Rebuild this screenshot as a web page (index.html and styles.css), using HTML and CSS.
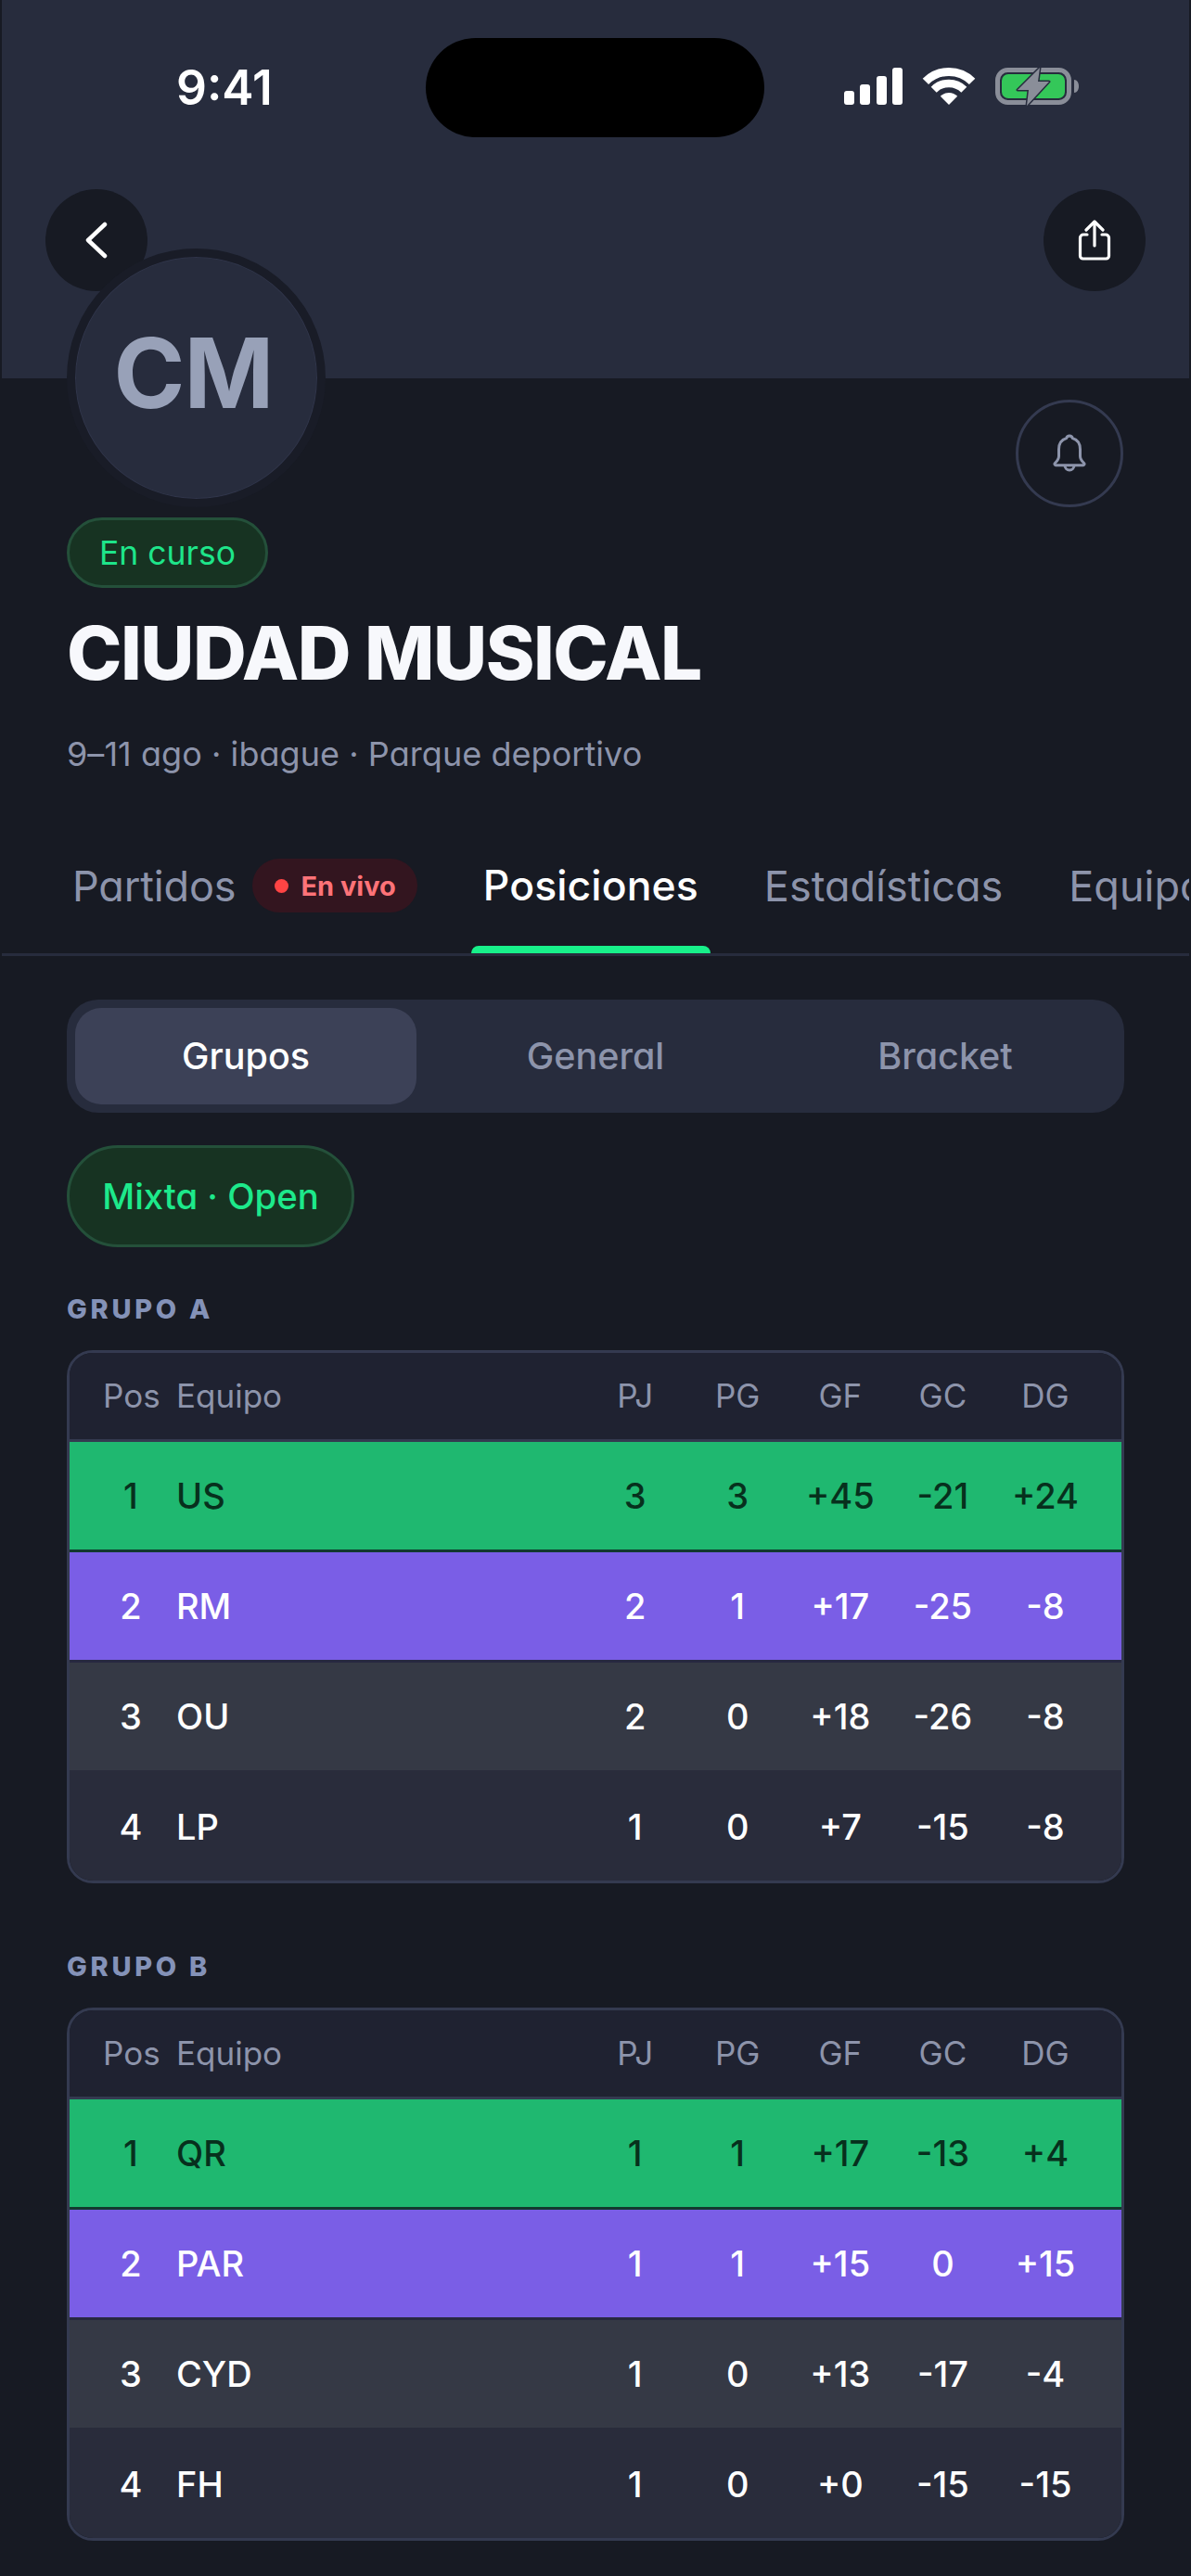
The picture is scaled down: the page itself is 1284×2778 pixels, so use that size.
FILE: index.html
```html
<!DOCTYPE html>
<html lang="es">
<head>
<meta charset="utf-8">
<title>Ciudad Musical</title>
<link rel="stylesheet" href="styles.css">
</head>
<body>
<div class="page">
  <header class="hero">
    <div class="status">
      <div class="time">9:41</div>
      <div class="island"></div>
      <svg class="status-icons" width="253" height="42" viewBox="0 0 253 42">
        <rect x="0" y="25" width="11" height="15" rx="3" fill="#fff"/>
        <rect x="17" y="18" width="11" height="22" rx="3" fill="#fff"/>
        <rect x="35" y="9" width="11" height="31" rx="3" fill="#fff"/>
        <rect x="52" y="0" width="11" height="40" rx="3" fill="#fff"/>
        <path d="M87.9 14.9A35.5 35.5 0 0 1 138.1 14.9" fill="none" stroke="#fff" stroke-width="9"/>
        <path d="M96.7 23.7A23 23 0 0 1 129.3 23.7" fill="none" stroke="#fff" stroke-width="8.5"/>
        <path d="M113 40L103.8 30.8A13 13 0 0 1 122.2 30.8Z" fill="#fff"/>
        <rect x="165.5" y="2.5" width="77" height="35" rx="11" fill="none" stroke="#8a8e99" stroke-width="5"/>
        <rect x="170" y="7" width="68" height="26" rx="7" fill="#34c759"/>
        <path d="M248 13c3 0 5 3 5 7s-2 7-5 7z" fill="#8a8e99"/>
        <polygon points="211,0 187,24 199,24 197,41 221,15 209,15" fill="#8a8e99" stroke="#272c3d" stroke-width="3" paint-order="stroke" stroke-linejoin="round"/>
      </svg>
    </div>
    <div class="hero-actions">
      <button class="round-btn" type="button" aria-label="Volver">
        <svg width="24" height="40" viewBox="0 0 24 40"><path d="M21 3L3 20L21 37" fill="none" stroke="#fff" stroke-width="4.5" stroke-linecap="round" stroke-linejoin="round"/></svg>
      </button>
      <button class="round-btn" type="button" aria-label="Compartir">
        <svg width="36" height="44" viewBox="0 0 36 44"><path d="M10 16H6a3.500 3.500 0 0 0-3.500 3.500V39a3 3 0 0 0 3 3H30.500a3 3 0 0 0 3-3V19.500A3.500 3.500 0 0 0 30 16H26M18 2V28M9 11L18 2L27 11" fill="none" stroke="#fff" stroke-width="3.200" stroke-linecap="round" stroke-linejoin="round"/></svg>
      </button>
    </div>
  </header>

  <section class="head">
    <div class="head-top">
      <div class="avatar"><span>CM</span></div>
      <button class="bell-btn" type="button" aria-label="Notificaciones">
        <svg width="36" height="42" viewBox="0 0 36 42"><path d="M18 2a3.500 3.500 0 0 1 3.300 2.600C27 6.300 29.500 11 29.500 16.500V24c0 3 2 5.500 4.200 7.500a1.300 1.300 0 0 1-.8 2.200H3.100a1.300 1.300 0 0 1-.8-2.200C4.500 29.500 6.500 27 6.500 24V16.500C6.500 11 9 6.300 14.700 4.600A3.500 3.500 0 0 1 18 2ZM13 34a5 5 0 0 0 10 0" fill="none" stroke="#8d94ab" stroke-width="3" stroke-linejoin="round"/></svg>
      </button>
    </div>
    <div class="status-pill">En curso</div>
    <h1 class="title">CIUDAD MUSICAL</h1>
    <p class="meta">9–11 ago · ibague · Parque deportivo</p>
  </section>

  <nav class="tabs">
    <div class="tab tab-matches">Partidos<span class="live"><i class="live-dot"></i>En vivo</span></div>
    <div class="tab tab-active">Posiciones</div>
    <div class="tab">Estadísticas</div>
    <div class="tab">Equipos</div>
  </nav>

  <main class="content">
    <div class="segment">
      <div class="seg seg-active">Grupos</div>
      <div class="seg">General</div>
      <div class="seg">Bracket</div>
    </div>
    <div class="chip">Mixta · Open</div>

    <h2 class="group-name">GRUPO A</h2>
    <div class="table">
      <div class="row row-head"><span class="pos">Pos</span><span class="team">Equipo</span><span>PJ</span><span>PG</span><span>GF</span><span>GC</span><span>DG</span></div>
      <div class="row row-first"><span class="pos">1</span><span class="team">US</span><span>3</span><span>3</span><span>+45</span><span>-21</span><span>+24</span></div>
      <div class="row row-second"><span class="pos">2</span><span class="team">RM</span><span>2</span><span>1</span><span>+17</span><span>-25</span><span>-8</span></div>
      <div class="row row-third"><span class="pos">3</span><span class="team">OU</span><span>2</span><span>0</span><span>+18</span><span>-26</span><span>-8</span></div>
      <div class="row row-last"><span class="pos">4</span><span class="team">LP</span><span>1</span><span>0</span><span>+7</span><span>-15</span><span>-8</span></div>
    </div>

    <h2 class="group-name group-next">GRUPO B</h2>
    <div class="table">
      <div class="row row-head"><span class="pos">Pos</span><span class="team">Equipo</span><span>PJ</span><span>PG</span><span>GF</span><span>GC</span><span>DG</span></div>
      <div class="row row-first"><span class="pos">1</span><span class="team">QR</span><span>1</span><span>1</span><span>+17</span><span>-13</span><span>+4</span></div>
      <div class="row row-second"><span class="pos">2</span><span class="team">PAR</span><span>1</span><span>1</span><span>+15</span><span>0</span><span>+15</span></div>
      <div class="row row-third"><span class="pos">3</span><span class="team">CYD</span><span>1</span><span>0</span><span>+13</span><span>-17</span><span>-4</span></div>
      <div class="row row-last"><span class="pos">4</span><span class="team">FH</span><span>1</span><span>0</span><span>+0</span><span>-15</span><span>-15</span></div>
    </div>
  </main>
</div>
</body>
</html>
```
FILE: styles.css
```css
* { box-sizing: border-box; }
html, body { margin: 0; padding: 0; }
body {
  width: 1284px;
  height: 2778px;
  overflow: hidden;
  background: #171a23;
  color: #fff;
  font-family: Inter, "Noto Sans", sans-serif;
  font-feature-settings: "cv11" 1;
}
.page { margin: 0 2px; width: 1280px; }

.hero { height: 408px; padding-top: 40px; background: #272c3d; }
.status {
  display: grid;
  grid-template-columns: 457px 365px 1fr;
  align-items: center;
  height: 107px;
}
.time { padding: 1px 0 0 188px; font-size: 51.500px; font-weight: 600; line-height: 107px; }
.island { height: 107px; border-radius: 54px; background: #000; }
.status-icons { display: block; margin: 0 0 0 86px; }
.hero-actions {
  display: flex;
  justify-content: space-between;
  padding: 57px 47px 0;
}
.round-btn {
  display: flex;
  align-items: center;
  justify-content: center;
  width: 110px;
  height: 110px;
  padding: 0;
  border: 0;
  border-radius: 50%;
  background: #171a23;
}

.head { padding: 0 70px; margin-top: -140px; position: relative; }
.head-top { display: flex; justify-content: space-between; align-items: flex-end; }
.avatar {
  display: flex;
  align-items: center;
  justify-content: center;
  width: 279px;
  height: 279px;
  padding: 0 6px 12px 0;
  border: 9px solid #191c27;
  border-radius: 50%;
  background: #272c3d;
  box-shadow: inset 0 0 0 1px #30354a;
  color: #98a1b8;
  font-size: 104px;
  font-weight: 700;
  letter-spacing: -1px;
}
.bell-btn {
  display: flex;
  align-items: center;
  justify-content: center;
  width: 116px;
  height: 116px;
  margin-right: 1px;
  padding: 0;
  border: 3px solid #343a50;
  border-radius: 50%;
  background: transparent;
}
.status-pill {
  display: flex;
  align-items: center;
  justify-content: center;
  width: 217px;
  height: 76px;
  margin-top: 11px;
  border: 3px solid #24503a;
  border-radius: 38px;
  background: #173322;
  color: #1ee58a;
  font-size: 35.500px;
}
.title {
  margin: 20px 0 0;
  font-size: 80px;
  font-weight: 800;
  line-height: 100px;
  letter-spacing: -1.500px;
  color: #f7f8fc;
  white-space: nowrap;
}
.meta {
  margin: 34px 0 0;
  font-size: 36px;
  line-height: 50px;
  letter-spacing: .05px;
  color: #8d94ab;
  white-space: nowrap;
}

.tabs {
  display: flex;
  gap: 45px;
  height: 149px;
  margin-top: 44px;
  padding: 0 0 0 63px;
  border-bottom: 3px solid #272c3d;
  overflow: hidden;
}
.tab {
  display: flex;
  flex: none;
  align-items: center;
  position: relative;
  height: 146px;
  padding: 0 13px;
  font-size: 45px;
  color: #8d94ab;
  white-space: nowrap;
}
.tab-matches { letter-spacing: -.15px; }
.tab-active { color: #fff; font-size: 44.500px; font-weight: 500; letter-spacing: .1px; }
.tab-active::after {
  content: "";
  position: absolute;
  left: 0;
  right: 0;
  bottom: 0;
  height: 8px;
  border-radius: 8px 8px 0 0;
  background: #18f08a;
}
.live {
  display: inline-flex;
  align-items: center;
  gap: 13px;
  height: 58px;
  margin-left: 18px;
  padding: 0 23px 0 24px;
  border-radius: 29px;
  background: #33151f;
  color: #ff7378;
  font-size: 29px;
  font-weight: 700;
  letter-spacing: 0;
}
.live-dot { width: 15px; height: 15px; border-radius: 50%; background: #ff4444; }

.content { padding: 47px 70px 0; }
.segment {
  display: flex;
  gap: 9px;
  height: 122px;
  padding: 9px;
  border-radius: 34px;
  background: #272c3d;
}
.seg {
  display: flex;
  flex: 1 1 0;
  align-items: center;
  justify-content: center;
  border-radius: 28px;
  color: #8d94ab;
  font-size: 39.500px;
  font-weight: 500;
}
.seg-active { background: #3c4157; color: #fff; }
.chip {
  display: flex;
  align-items: center;
  justify-content: center;
  width: 310px;
  height: 110px;
  margin-top: 35px;
  border: 3px solid #24503a;
  border-radius: 55px;
  background: #173322;
  color: #1de98b;
  font-size: 38.300px;
  font-weight: 500;
}
.group-name {
  margin: 47px 0 24px;
  font-size: 29px;
  font-weight: 800;
  line-height: 40px;
  letter-spacing: 3.700px;
  color: #8492b8;
}
.group-next { margin-top: 70px; }
.table {
  border: 3px solid #343a50;
  border-radius: 28px;
  overflow: hidden;
}
.row {
  display: grid;
  grid-template-columns: 60px 1fr repeat(5, 110.600px);
  align-items: center;
  height: 119px;
  padding: 0 26.700px 0 36px;
  border-bottom: 3px solid #272c3d;
  font-size: 38px;
  font-weight: 500;
  text-align: center;
}
.pos { white-space: nowrap; }
.team { padding-left: 19px; text-align: left; }
.row-head {
  height: 96px;
  padding-bottom: 2px;
  border-bottom-color: #343a50;
  background: #1f2231;
  color: #8d94ab;
  font-size: 35px;
  font-weight: 400;
}
.row-first { background: #1fb870; border-bottom-color: #12392f; color: #07301d; }
.row-second { background: #7a5ee6; border-bottom-color: #272840; }
.row-third { background: #353945; border-bottom-color: #292c3b; }
.row-last { height: 116px; border-bottom: 0; background: #292c3b; }
```
